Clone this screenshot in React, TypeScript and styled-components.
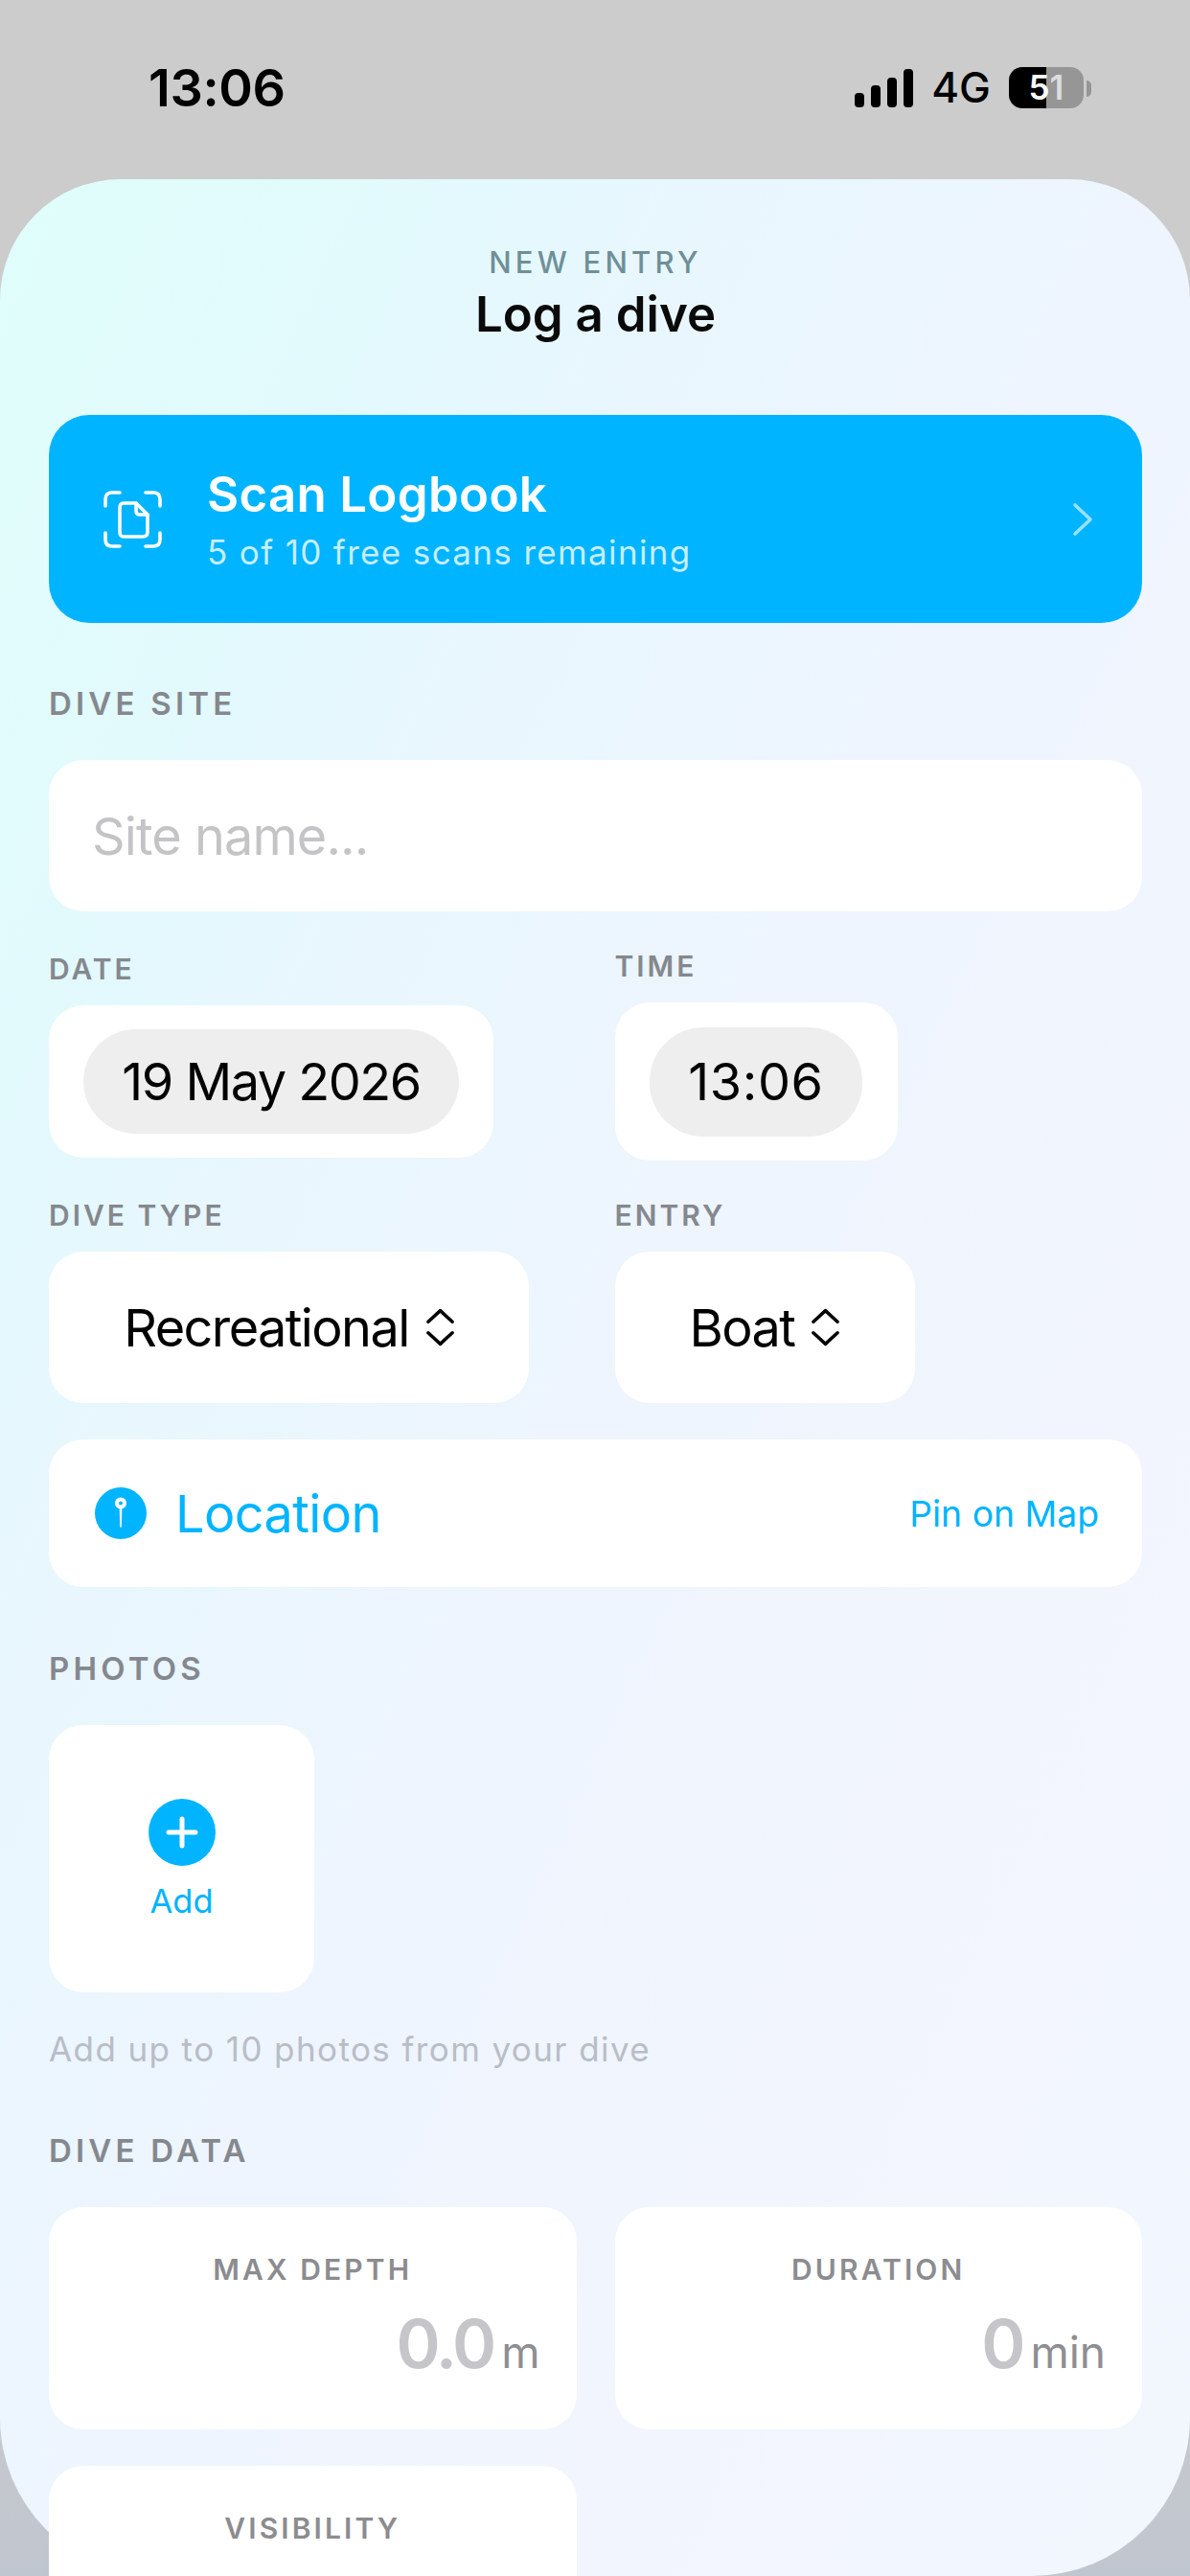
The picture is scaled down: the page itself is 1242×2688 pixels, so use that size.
import { FC } from "react";
import styled, { createGlobalStyle } from "styled-components";

const GlobalStyle = createGlobalStyle`
	html, body {
		margin: 0;
		padding: 0;
		background: #ccc;
	}
	* {
		box-sizing: border-box;
	}
`;

const BLUE = "#00b4ff";
const FONT = `Inter, "Liberation Sans", sans-serif`;

const SortIcon: FC = () => (
	<svg width='29' height='40' viewBox='0 0 30 40' fill='none' stroke='#000' strokeWidth='3.6' strokeLinecap='round' strokeLinejoin='round'>
		<path d='M2 14 L15 2 L28 14' />
		<path d='M2 26 L15 38 L28 26' />
	</svg>
);

const ScanIcon: FC = () => (
	<svg width='61' height='60' viewBox='0 0 61 60' fill='none' stroke='#fff' strokeWidth='3.6' strokeLinecap='round' strokeLinejoin='round'>
		<path d='M2 16 V9 Q2 2 9 2 H17' />
		<path d='M44 2 H52 Q59 2 59 9 V16' />
		<path d='M2 44 V51 Q2 58 9 58 H17' />
		<path d='M44 58 H52 Q59 58 59 51 V44' />
		<path d='M21 13 H34 L46 25 V43 Q46 48 41 48 H21 Q17 48 17 43 V18 Q17 13 21 13 Z' />
		<path d='M34 13 V21 Q34 25 38 25 H46' />
	</svg>
);

const ChevronIcon: FC = () => (
	<svg width='22' height='36' viewBox='0 0 22 36' fill='none' stroke='#fff' strokeOpacity='0.6' strokeWidth='3.6' strokeLinecap='round' strokeLinejoin='round'>
		<path d='M3 3 L19 18 L3 33' />
	</svg>
);

const PinIcon: FC = () => (
	<svg width='54' height='54' viewBox='0 0 54 54'>
		<circle cx='27' cy='27' r='27' fill={BLUE} />
		<circle cx='27' cy='16.5' r='6' fill='#fff' />
		<circle cx='27' cy='16.5' r='2' fill={BLUE} />
		<path d='M25.6 20 H28.4 L27.8 41 Q27 43 26.2 41 Z' fill='#fff' />
	</svg>
);

const PlusIcon: FC = () => (
	<svg width='70' height='70' viewBox='0 0 70 70' fill='none'>
		<circle cx='35' cy='35' r='35' fill={BLUE} />
		<path d='M35 21 V49 M21 35 H49' stroke='#fff' strokeWidth='5' strokeLinecap='round' />
	</svg>
);

export default function App() {
	return (
		<Page>
			<GlobalStyle />
			<StatusBar>
				<Clock>13:06</Clock>
				<StatusRight>
					<SignalBars>
						<SignalBar $height={15} />
						<SignalBar $height={23} />
						<SignalBar $height={31} />
						<SignalBar $height={40} />
					</SignalBars>
					<Network>4G</Network>
					<Battery>
						5<BatteryDim>1</BatteryDim>
					</Battery>
				</StatusRight>
			</StatusBar>

			<Sheet>
				<Eyebrow>NEW ENTRY</Eyebrow>
				<Title>Log a dive</Title>

				<ScanCard>
					<ScanIcon />
					<ScanText>
						<ScanTitle>Scan Logbook</ScanTitle>
						<ScanSub>5 of 10 free scans remaining</ScanSub>
					</ScanText>
					<ChevronIcon />
				</ScanCard>

				<SectionLabel>DIVE SITE</SectionLabel>
				<SiteInput>Site name...</SiteInput>

				<FieldRow>
					<Field>
						<FieldLabel>DATE</FieldLabel>
						<PickerCard $width={464} $height={159}>
							<Pill $height={109} $spacing={-1.5}>
								19 May 2026
							</Pill>
						</PickerCard>
					</Field>
					<Field>
						<FieldLabel>TIME</FieldLabel>
						<PickerCard $width={295} $height={165}>
							<Pill $height={114} $spacing={0.6}>
								13:06
							</Pill>
						</PickerCard>
					</Field>
				</FieldRow>

				<FieldRow>
					<Field>
						<FieldLabel>DIVE TYPE</FieldLabel>
						<PickerCard $width={501} $height={158}>
							<SelectValue>
								Recreational <SortIcon />
							</SelectValue>
						</PickerCard>
					</Field>
					<Field>
						<FieldLabel>ENTRY</FieldLabel>
						<PickerCard $width={313} $height={158}>
							<SelectValue>
								Boat <SortIcon />
							</SelectValue>
						</PickerCard>
					</Field>
				</FieldRow>

				<LocationCard>
					<PinIcon />
					<LocationText>Location</LocationText>
					<PinLink>Pin on Map</PinLink>
				</LocationCard>

				<PhotosLabel>PHOTOS</PhotosLabel>
				<AddCard>
					<PlusIcon />
					<AddText>Add</AddText>
				</AddCard>
				<Hint>Add up to 10 photos from your dive</Hint>

				<SectionLabel>DIVE DATA</SectionLabel>
				<StatGrid>
					<StatCard>
						<StatLabel>MAX DEPTH</StatLabel>
						<StatValue>
							<StatNumber>0.0</StatNumber>
							<StatUnit>m</StatUnit>
						</StatValue>
					</StatCard>
					<StatCard>
						<StatLabel>DURATION</StatLabel>
						<StatValue>
							<StatNumber>0</StatNumber>
							<StatUnit>min</StatUnit>
						</StatValue>
					</StatCard>
					<StatCard>
						<StatLabel>VISIBILITY</StatLabel>
					</StatCard>
				</StatGrid>
			</Sheet>
		</Page>
	);
}

const Page = styled.div`
	width: 1242px;
	height: 2688px;
	overflow: hidden;
	font-family: ${FONT};
	background: linear-gradient(180deg, #cccccc 0, #cccccc 88%, #c0c6cf 100%);
`;

const StatusBar = styled.header`
	height: 187px;
	padding: 70px 111px 0 155px;
	display: flex;
	justify-content: space-between;
	align-items: flex-start;
`;

const Clock = styled.div`
	font-size: 54px;
	line-height: 44px;
	font-weight: 600;
	letter-spacing: -0.4px;
	color: #000;
`;

const StatusRight = styled.div`
	display: flex;
	align-items: center;
	height: 43px;
	gap: 19px;
`;

const SignalBars = styled.div`
	display: flex;
	align-items: flex-end;
	gap: 6.5px;
	height: 40px;
`;

const SignalBar = styled.span<{ $height: number }>`
	width: 10.5px;
	height: ${(p) => p.$height}px;
	border-radius: 4px;
	background: #000;
`;

const Network = styled.div`
	font-size: 44px;
	font-weight: 500;
	color: #000;
	line-height: 43px;
`;

const Battery = styled.div`
	position: relative;
	width: 78px;
	height: 43px;
	border-radius: 14px;
	background: linear-gradient(90deg, #000 50%, #969696 50%);
	color: #fff;
	font-size: 35px;
	font-weight: 600;
	line-height: 43px;
	text-align: center;
	&::after {
		content: "";
		position: absolute;
		left: 81px;
		top: 14px;
		width: 5px;
		height: 17px;
		border-radius: 0 6px 6px 0;
		background: #969696;
	}
`;

const BatteryDim = styled.span`
	color: #dddddd;
`;

const Sheet = styled.main`
	height: 2501px;
	padding: 68px 50px 0 51px;
	display: flex;
	flex-direction: column;
	border-radius: 126px 126px 165px 165px;
	background: linear-gradient(115deg, #dffefa 0, #e3f9fd 21%, #e8f7fd 30%, #eef5fe 50%, #f2f5fd 75%, #f2f7fe 100%);
`;

const Eyebrow = styled.div`
	font-size: 31px;
	line-height: 38px;
	font-weight: 500;
	letter-spacing: 4.2px;
	text-align: center;
	color: #6f8f98;
`;

const Title = styled.h1`
	margin: 5px 0 75px;
	font-size: 51px;
	line-height: 60px;
	font-weight: 600;
	text-align: center;
	color: #0a0a0a;
`;

const ScanCard = styled.div`
	flex: none;
	height: 217px;
	padding: 0 51px 0 57px;
	display: flex;
	align-items: center;
	border-radius: 42px;
	background: ${BLUE};
`;

const ScanText = styled.div`
	flex: 1;
	margin-left: 47px;
	display: flex;
	flex-direction: column;
	gap: 8px;
`;

const ScanTitle = styled.div`
	font-size: 51px;
	line-height: 60px;
	font-weight: 600;
	letter-spacing: 0.3px;
	color: #fff;
`;

const ScanSub = styled.div`
	font-size: 35px;
	line-height: 44px;
	letter-spacing: 1.35px;
	color: rgba(255, 255, 255, 0.78);
`;

const SectionLabel = styled.div`
	flex: none;
	margin: 64px 0 39px;
	font-size: 33px;
	line-height: 40px;
	font-weight: 600;
	letter-spacing: 4.2px;
	color: #85888e;
`;

const PhotosLabel = styled(SectionLabel)`
	margin-top: 65px;
`;

const SiteInput = styled.div`
	flex: none;
	height: 158px;
	padding: 0 45px;
	display: flex;
	align-items: center;
	border-radius: 36px;
	background: #fff;
	font-size: 54px;
	letter-spacing: -0.9px;
	color: #c4c4c7;
`;

const FieldRow = styled.div`
	flex: none;
	margin-top: 37px;
	display: grid;
	grid-template-columns: 1fr 1fr;
	column-gap: 40px;
	align-items: center;
`;

const Field = styled.div`
	display: flex;
	flex-direction: column;
`;

const FieldLabel = styled.div`
	margin-bottom: 18px;
	font-size: 30px;
	line-height: 40px;
	font-weight: 600;
	letter-spacing: 3px;
	color: #85888e;
`;

const PickerCard = styled.div<{ $width: number; $height: number }>`
	width: ${(p) => p.$width}px;
	height: ${(p) => p.$height}px;
	display: flex;
	align-items: center;
	justify-content: center;
	border-radius: 36px;
	background: #fff;
`;

const Pill = styled.div<{ $height: number; $spacing: number }>`
	height: ${(p) => p.$height}px;
	padding: 0 40px;
	display: flex;
	align-items: center;
	border-radius: 56px;
	background: #eeeeee;
	font-size: 54px;
	letter-spacing: ${(p) => p.$spacing}px;
	color: #000;
`;

const SelectValue = styled.div`
	display: flex;
	align-items: center;
	gap: 18px;
	font-size: 54px;
	letter-spacing: -1.6px;
	color: #000;
	white-space: nowrap;
`;

const LocationCard = styled.div`
	flex: none;
	height: 154px;
	margin-top: 38px;
	padding: 0 45px 0 48px;
	display: flex;
	align-items: center;
	border-radius: 36px;
	background: #fff;
`;

const LocationText = styled.div`
	flex: 1;
	margin-left: 30px;
	font-size: 54px;
	letter-spacing: -0.6px;
	color: ${BLUE};
`;

const PinLink = styled.div`
	font-size: 37.3px;
	color: ${BLUE};
`;

const AddCard = styled.div`
	flex: none;
	width: 277px;
	height: 279px;
	padding-top: 77px;
	display: flex;
	flex-direction: column;
	align-items: center;
	gap: 16px;
	border-radius: 36px;
	background: #fff;
`;

const AddText = styled.div`
	font-size: 34.5px;
	line-height: 42px;
	color: ${BLUE};
`;

const Hint = styled.div`
	flex: none;
	margin-top: 37px;
	font-size: 35px;
	line-height: 44px;
	letter-spacing: 1.4px;
	color: #b9bdc7;
`;

const StatGrid = styled.div`
	flex: none;
	display: grid;
	grid-template-columns: 1fr 1fr;
	gap: 38px 40px;
`;

const StatCard = styled.div`
	height: 232px;
	padding: 45px 38px 0;
	border-radius: 36px;
	background: #fff;
`;

const StatLabel = styled.div`
	font-size: 30px;
	line-height: 40px;
	font-weight: 600;
	letter-spacing: 3.1px;
	text-align: center;
	color: #8c8c90;
`;

const StatValue = styled.div`
	margin-top: 18px;
	display: flex;
	justify-content: flex-end;
	align-items: baseline;
	gap: 8px;
`;

const StatNumber = styled.span`
	font-size: 70px;
	line-height: 80px;
	font-weight: 600;
	letter-spacing: -3px;
	color: #c6c6ca;
`;

const StatUnit = styled.span`
	font-size: 46px;
	line-height: 80px;
	color: #8e8e93;
`;
